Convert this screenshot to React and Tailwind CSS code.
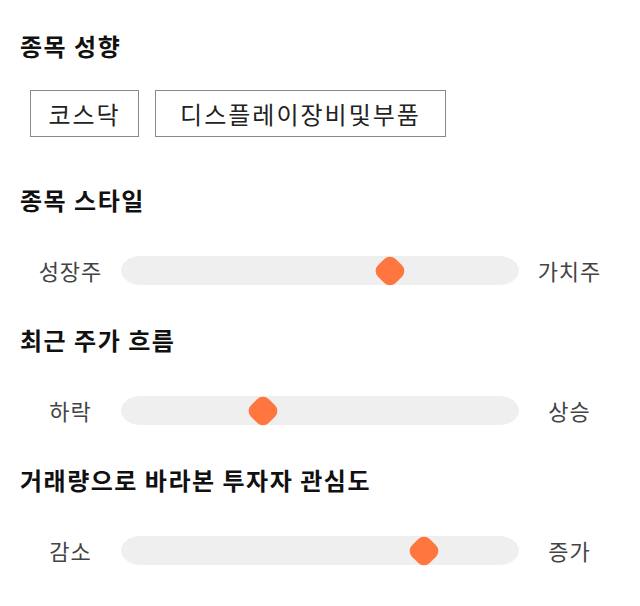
const sliders = [
  { title: "종목 스타일", left: "성장주", right: "가치주", pos: "left-[67.6%]", mt: "mt-[48px]" },
  { title: "최근 주가 흐름", left: "하락", right: "상승", pos: "left-[35.7%]", mt: "mt-[40px]" },
  { title: "거래량으로 바라본 투자자 관심도", left: "감소", right: "증가", pos: "left-[76.1%]", mt: "mt-[40px]" },
];

const tags = [
  { name: "코스닥", width: "w-[109px]" },
  { name: "디스플레이장비및부품", width: "w-[291px]" },
];

function Heading({ children, className = "" }) {
  return (
    <h2 className={`h-[30px] leading-[30px] text-[24px] tracking-[1.5px] font-bold text-[#111] ${className}`}>
      {children}
    </h2>
  );
}

function Slider({ left, right, pos }) {
  return (
    <div className="mt-[41px] flex h-[29px] items-center">
      <span className="w-[101px] text-center text-[22px] tracking-[1px] text-[#444]">{left}</span>
      <div className="relative h-[29px] flex-1 rounded-[20px/50%] bg-[#efefef]">
        <div
          className={`absolute top-1/2 ${pos} h-[25px] w-[25px] -translate-x-1/2 -translate-y-1/2 rotate-45 rounded-[8px] bg-[#ff773f]`}
        />
      </div>
      <span className="w-[101px] text-center text-[22px] tracking-[1px] text-[#444]">{right}</span>
    </div>
  );
}

export default function App() {
  return (
    <div
      className="min-h-[606px] bg-white px-5 pt-[31px]"
      style={{ fontFamily: '"Noto Sans CJK KR", "Noto Sans", sans-serif' }}
    >
      <Heading>종목 성향</Heading>
      <div className="mt-[29px] flex gap-4 pl-[10px]">
        {tags.map((tag) => (
          <span
            key={tag.name}
            className={`flex h-[47px] ${tag.width} items-center justify-center border border-[#888] text-[24px] tracking-[2px] text-[#222]`}
          >
            {tag.name}
          </span>
        ))}
      </div>
      {sliders.map((s) => (
        <section key={s.title} className={s.mt}>
          <Heading>{s.title}</Heading>
          <Slider left={s.left} right={s.right} pos={s.pos} />
        </section>
      ))}
    </div>
  );
}
